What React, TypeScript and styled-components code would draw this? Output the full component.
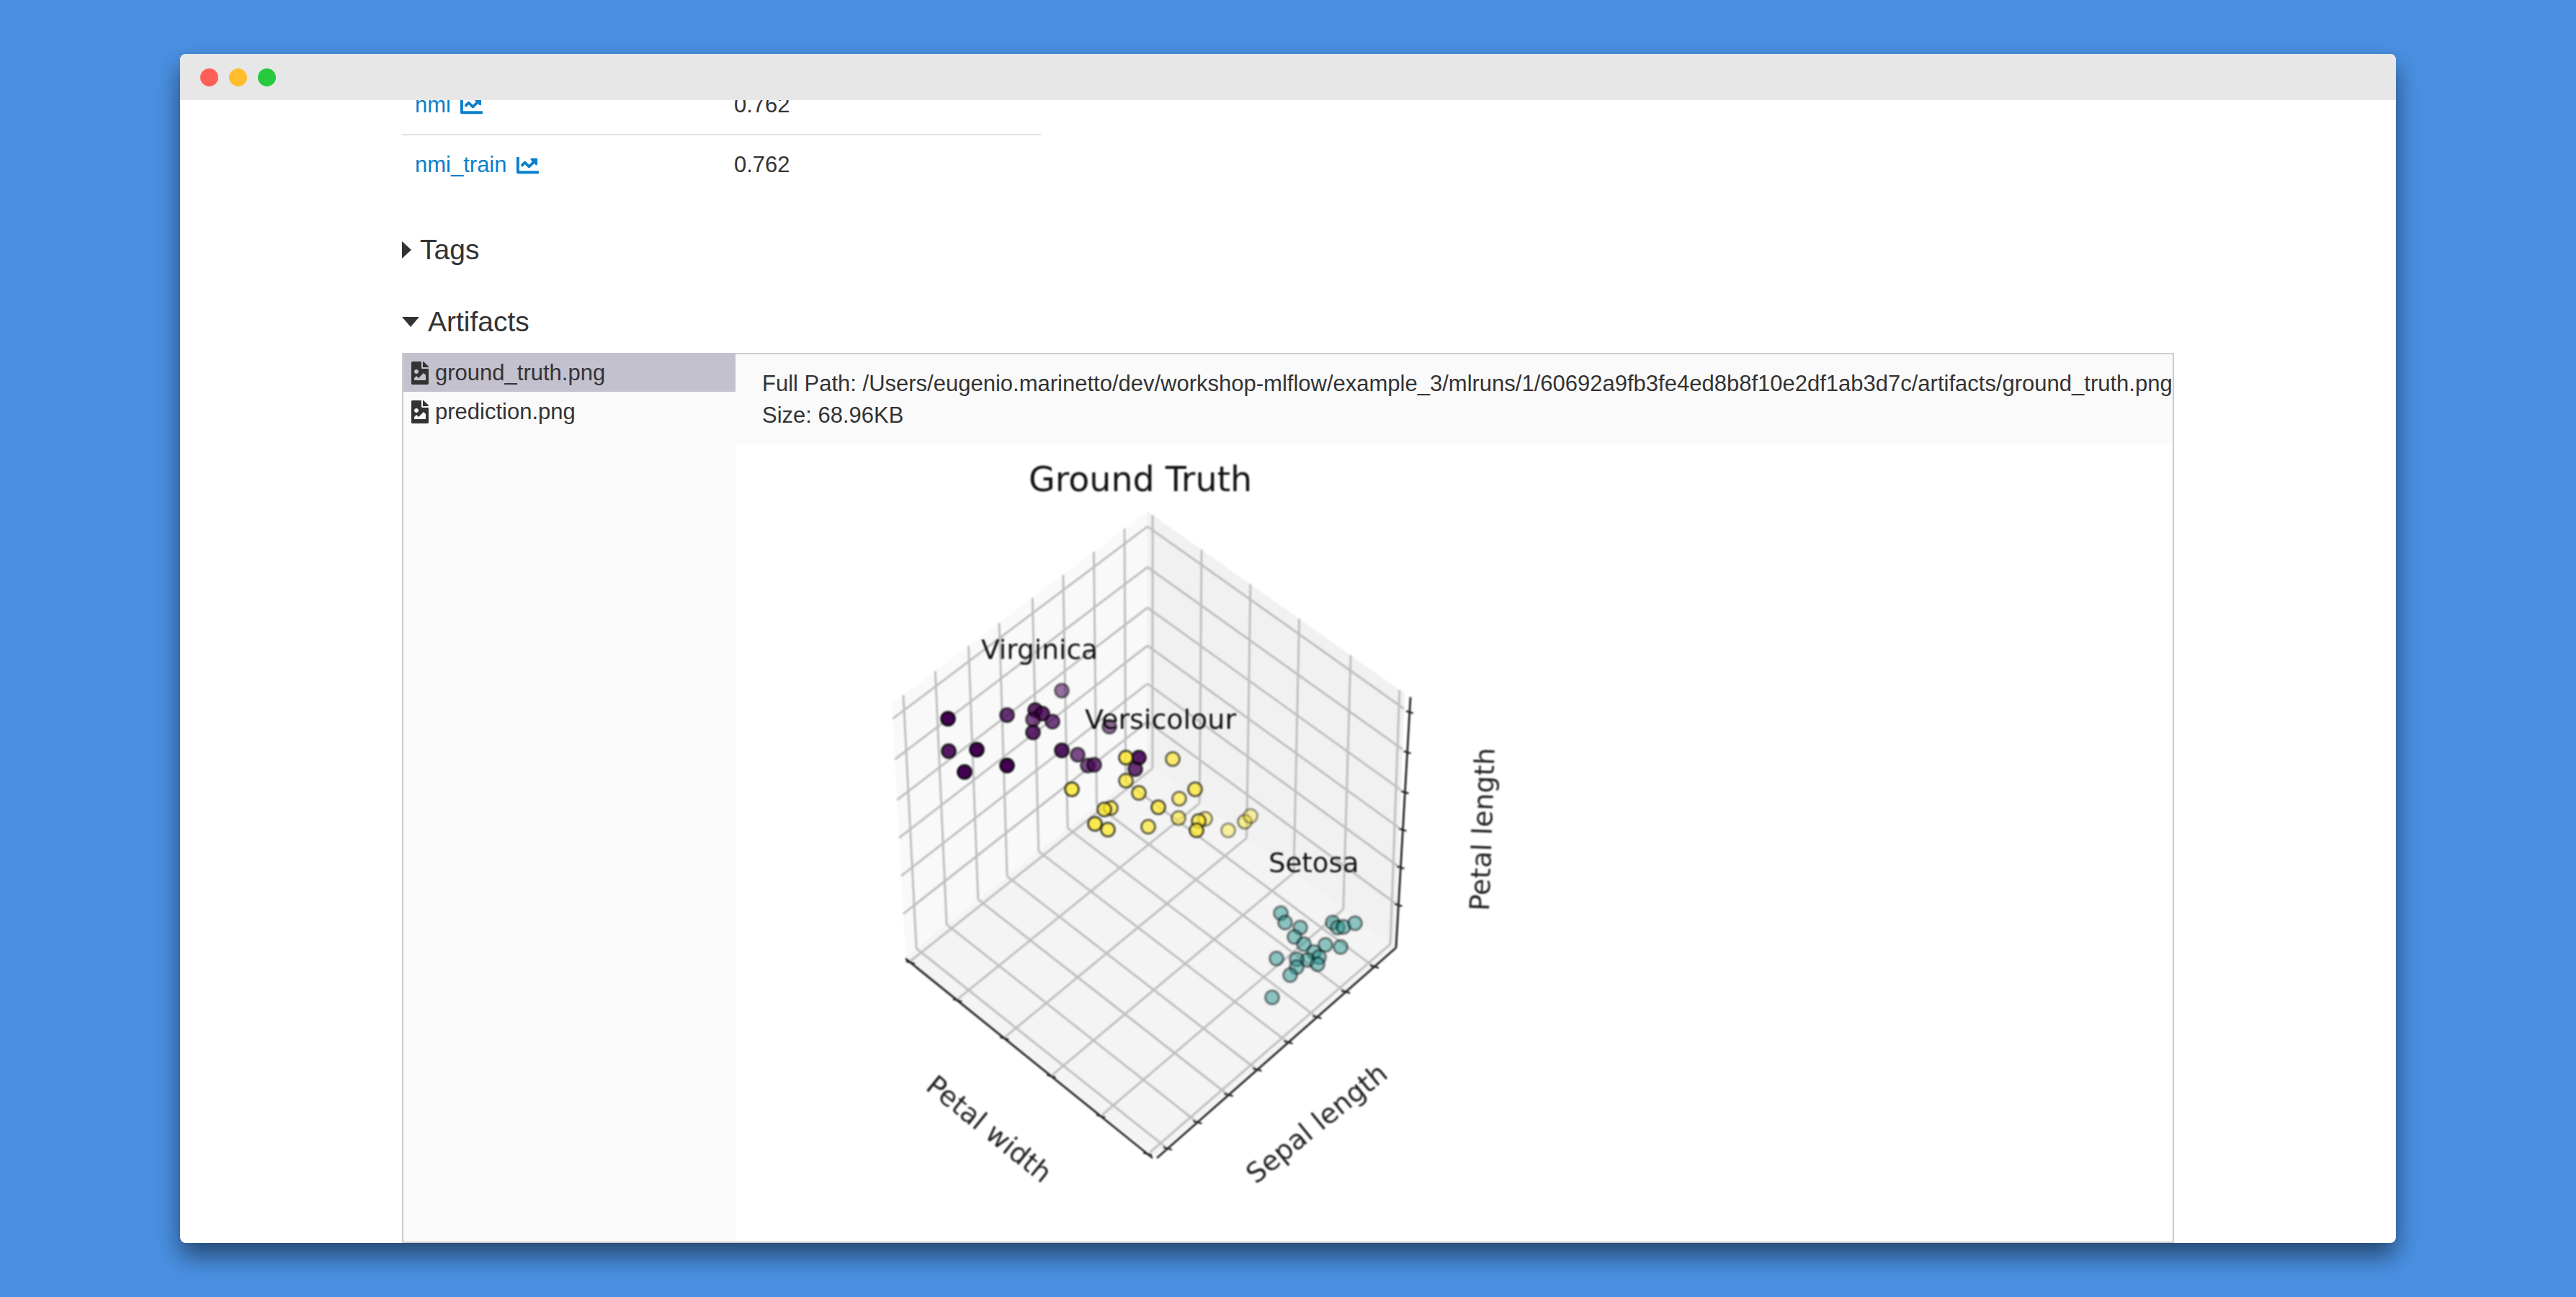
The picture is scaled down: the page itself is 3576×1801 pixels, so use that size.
import React from 'react';
import styled, { createGlobalStyle } from 'styled-components';
import { FaChartLine, FaFileImage } from 'react-icons/fa';

const GlobalStyle = createGlobalStyle`
  html, body {
    margin: 0;
    padding: 0;
    background: #4a90e2;
  }
  * {
    box-sizing: border-box;
  }
`;

const Desktop = styled.div`
  width: 3576px;
  height: 1801px;
  padding: 75px 250px;
  background: #4a90e2;
  font-family: 'Liberation Sans', Arial, sans-serif;
  color: #333;
  overflow: hidden;
`;

const Window = styled.div`
  display: flex;
  flex-direction: column;
  width: 3076px;
  height: 1651px;
  background: #fff;
  border-radius: 8px;
  box-shadow: 0 18px 34px rgba(0, 0, 0, 0.5);
  overflow: hidden;
`;

const TitleBar = styled.div`
  position: relative;
  z-index: 1;
  flex: none;
  display: flex;
  align-items: center;
  gap: 15px;
  height: 64px;
  padding-left: 28px;
  background: #e7e7e7;
`;

const Light = styled.span<{ $color: string }>`
  width: 25px;
  height: 25px;
  border-radius: 50%;
  background: ${(p) => p.$color};
`;

const Content = styled.div`
  flex: 1;
  display: flex;
  flex-direction: column;
  min-height: 0;
  padding-left: 308px;
  padding-right: 308px;
`;

const MetricTable = styled.div`
  flex: none;
  width: 887px;
  margin-top: -35px;
`;

const MetricRow = styled.div`
  display: grid;
  grid-template-columns: 443px 1fr;
  align-items: center;
  height: 82px;
  padding: 2px 0 0 18px;
  font-size: 31px;
  & + & {
    border-top: 2px solid #e2e2e2;
  }
`;

const MetricLink = styled.a`
  display: flex;
  align-items: center;
  gap: 13px;
  color: #0a80cc;
`;

const SectionHeader = styled.div<{ $top: number }>`
  flex: none;
  display: flex;
  align-items: center;
  gap: 12px;
  height: 44px;
  margin-top: ${(p) => p.$top}px;
  font-size: 39px;
  color: #333;
`;

const CaretRight = styled.span`
  width: 0;
  height: 0;
  border-top: 12px solid transparent;
  border-bottom: 12px solid transparent;
  border-left: 13px solid #333;
`;

const CaretDown = styled.span`
  width: 0;
  height: 0;
  border-left: 12px solid transparent;
  border-right: 12px solid transparent;
  border-top: 14px solid #333;
`;

const ArtifactBox = styled.div`
  flex: 1;
  display: grid;
  grid-template-columns: 461px 1fr;
  min-height: 0;
  width: 2460px;
  margin-top: 21px;
  border: 2px solid #ccc;
`;

const FileList = styled.div`
  background: #fafafa;
  margin-top: -2px;
`;

const FileRow = styled.div<{ $selected?: boolean }>`
  display: flex;
  align-items: center;
  gap: 5px;
  height: 54px;
  padding: 1px 0 0 7px;
  font-size: 31px;
  background: ${(p) => (p.$selected ? '#c4c1cf' : 'transparent')};
`;

const Preview = styled.div`
  display: flex;
  flex-direction: column;
  min-width: 0;
  overflow: hidden;
`;

const PreviewHeader = styled.div`
  flex: none;
  height: 124px;
  padding: 19px 0 0 37px;
  background: #fafafa;
  font-size: 31px;
  line-height: 44px;
  white-space: nowrap;
  color: #333;
`;

const PlotFrame = styled.div`
  flex: 1;
  min-height: 0;
  overflow: hidden;
  background: #fff;
`;

const PlotSvg = styled.svg`
  display: block;
  filter: blur(1px);
  font-family: 'DejaVu Sans', sans-serif;
`;

type Pt = [number, number];

const lerp = (a: Pt, b: Pt, t: number): Pt => [a[0] + (b[0] - a[0]) * t, a[1] + (b[1] - a[1]) * t];

const apex: Pt = [1593, 710];
const back: Pt = [1593, 1062];
const leftTop: Pt = [1238, 977];
const left: Pt = [1257, 1329];
const rightTop: Pt = [1950, 963];
const right: Pt = [1937, 1316];
const bottom: Pt = [1603, 1606];

const aGrid = [0.09, 0.21, 0.33, 0.45, 0.58, 0.7, 0.83, 0.955];
const cGrid = [0.02, 0.21, 0.4, 0.59, 0.79, 0.98];
const zGrid = [0.06, 0.22, 0.38, 0.53, 0.68, 0.83];

const segments: [Pt, Pt][] = [
  ...aGrid.flatMap((a): [Pt, Pt][] => [
    [lerp(back, left, a), lerp(right, bottom, a)],
    [lerp(apex, leftTop, a), lerp(back, left, a)],
  ]),
  ...cGrid.flatMap((c): [Pt, Pt][] => [
    [lerp(back, right, c), lerp(left, bottom, c)],
    [lerp(apex, rightTop, c), lerp(back, right, c)],
  ]),
  ...zGrid.flatMap((z): [Pt, Pt][] => [
    [lerp(apex, back, z), lerp(leftTop, left, z)],
    [lerp(apex, back, z), lerp(rightTop, right, z)],
  ]),
];

const axisLeftEnd: Pt = [1257, 1331];
const axisBottom: Pt = [1600, 1608];
const axisBottomR: Pt = [1606, 1608];
const axisRightEnd: Pt = [1938, 1316];
const axisTop: Pt = [1958, 968];

const poly = (pts: Pt[]) => pts.map((p) => p.join(',')).join(' ');

// scatter points as read off the plot: x, y, opacity
const virginica = [
  [1474, 959, 0.55], [1316, 998, 1], [1398, 993, 0.8], [1437, 986, 0.85], [1447, 991, 0.85],
  [1434, 999, 0.7], [1461, 1002, 0.75], [1434, 1017, 0.85], [1540, 1009, 0.6], [1317, 1043, 0.9],
  [1356, 1041, 1], [1474, 1042, 0.9], [1496, 1048, 0.7], [1510, 1063, 0.7], [1519, 1062, 0.75],
  [1581, 1052, 0.9], [1576, 1068, 0.8], [1339, 1072, 1], [1398, 1063, 1],
];
const versicolor = [
  [1563, 1052, 0.8], [1628, 1054, 0.65], [1563, 1084, 0.7], [1488, 1096, 0.8], [1581, 1101, 0.7],
  [1659, 1096, 0.7], [1637, 1109, 0.6], [1608, 1121, 0.75], [1542, 1122, 0.65], [1533, 1124, 0.75],
  [1520, 1144, 0.8], [1538, 1152, 0.75], [1594, 1148, 0.65], [1636, 1136, 0.55], [1673, 1137, 0.5],
  [1664, 1140, 0.7], [1661, 1153, 0.75], [1705, 1153, 0.42], [1728, 1141, 0.48], [1736, 1133, 0.38],
];
const setosa = [
  [1778, 1268], [1784, 1281], [1805, 1288], [1797, 1301], [1810, 1311], [1840, 1312], [1861, 1315],
  [1850, 1281], [1857, 1288], [1865, 1287], [1881, 1282], [1824, 1322], [1831, 1329], [1815, 1333],
  [1800, 1332], [1829, 1339], [1800, 1343], [1772, 1331], [1791, 1354], [1766, 1385],
];

const Dots = ({ points, fill }: { points: number[][]; fill: string }) => (
  <g>
    {points.map(([x, y, o = 0.5]) => (
      <circle
        key={`${x}-${y}`}
        cx={x}
        cy={y}
        r={9.5}
        fill={fill}
        fillOpacity={o}
        stroke="#000"
        strokeOpacity={o * 0.7 + 0.1}
        strokeWidth={3}
      />
    ))}
  </g>
);

const ticks = (from: Pt, to: Pt, grid: number[], size: number, key: string) => grid.map((t) => {
  const p = lerp(from, to, t);
  return (
    <line
      key={`${key}-${t}`}
      stroke="#222"
      strokeWidth={2.4}
      x1={p[0] - size}
      y1={p[1] - size * 0.3}
      x2={p[0] + size}
      y2={p[1] + size * 0.3}
    />
  );
});

const Plot = () => (
  <PlotSvg width={1996} height={1108} viewBox="1021 616 1996 1108">
    <polygon points={poly([apex, back, left, leftTop])} fill="#f9f9f9" />
    <polygon points={poly([apex, back, right, rightTop])} fill="#f1f1f1" />
    <polygon points={poly([back, right, bottom, left])} fill="#f4f4f4" />
    <g stroke="#bfbfbf" strokeWidth={3}>
      {segments.map(([a, b]) => (
        <line key={`${a.join()}-${b.join()}`} x1={a[0]} y1={a[1]} x2={b[0]} y2={b[1]} />
      ))}
    </g>
    <g stroke="#222" strokeWidth={2.8}>
      <line x1={axisLeftEnd[0]} y1={axisLeftEnd[1]} x2={axisBottom[0]} y2={axisBottom[1]} />
      <line x1={axisBottomR[0]} y1={axisBottomR[1]} x2={axisRightEnd[0]} y2={axisRightEnd[1]} />
      <line x1={axisRightEnd[0]} y1={axisRightEnd[1]} x2={axisTop[0]} y2={axisTop[1]} />
    </g>
    {ticks(axisLeftEnd, axisBottom, cGrid, 6, 'c')}
    {ticks(axisRightEnd, axisBottomR, aGrid, 6, 'a')}
    {ticks(axisTop, axisRightEnd, zGrid, 5, 'z')}
    <Dots points={setosa} fill="#21918c" />
    <Dots points={virginica} fill="#440154" />
    <Dots points={versicolor} fill="#fde725" />
    <g fill="#111">
      <text x={1428} y={682} fontSize={47.5}>Ground Truth</text>
      <text x={1362} y={915} fontSize={37.5}>Virginica</text>
      <text x={1506} y={1012} fontSize={38}>Versicolour</text>
      <text x={1761} y={1211} fontSize={37}>Setosa</text>
    </g>
    <g fill="#222" fontSize={38} textAnchor="middle">
      <text transform="translate(2071 1152) rotate(-88)">Petal length</text>
      <text transform="translate(1365 1578) rotate(39)">Petal width</text>
      <text transform="translate(1836 1570) rotate(-39)">Sepal length</text>
    </g>
  </PlotSvg>
);

const App = () => (
  <Desktop>
    <GlobalStyle />
    <Window>
      <TitleBar>
        <Light $color="#ff5f56" />
        <Light $color="#ffbd2e" />
        <Light $color="#27c93f" />
      </TitleBar>
      <Content>
        <MetricTable>
          <MetricRow>
            <MetricLink>
              nmi
              <FaChartLine size={31} />
            </MetricLink>
            <span>0.762</span>
          </MetricRow>
          <MetricRow>
            <MetricLink>
              nmi_train
              <FaChartLine size={31} />
            </MetricLink>
            <span>0.762</span>
          </MetricRow>
        </MetricTable>
        <SectionHeader $top={57}>
          <CaretRight />
          Tags
        </SectionHeader>
        <SectionHeader $top={56}>
          <CaretDown />
          Artifacts
        </SectionHeader>
        <ArtifactBox>
          <FileList>
            <FileRow $selected>
              <FaFileImage size={32} />
              ground_truth.png
            </FileRow>
            <FileRow>
              <FaFileImage size={32} />
              prediction.png
            </FileRow>
          </FileList>
          <Preview>
            <PreviewHeader>
              <div>Full Path: /Users/eugenio.marinetto/dev/workshop-mlflow/example_3/mlruns/1/60692a9fb3fe4ed8b8f10e2df1ab3d7c/artifacts/ground_truth.png</div>
              <div>Size: 68.96KB</div>
            </PreviewHeader>
            <PlotFrame>
              <Plot />
            </PlotFrame>
          </Preview>
        </ArtifactBox>
      </Content>
    </Window>
  </Desktop>
);

export default App;
